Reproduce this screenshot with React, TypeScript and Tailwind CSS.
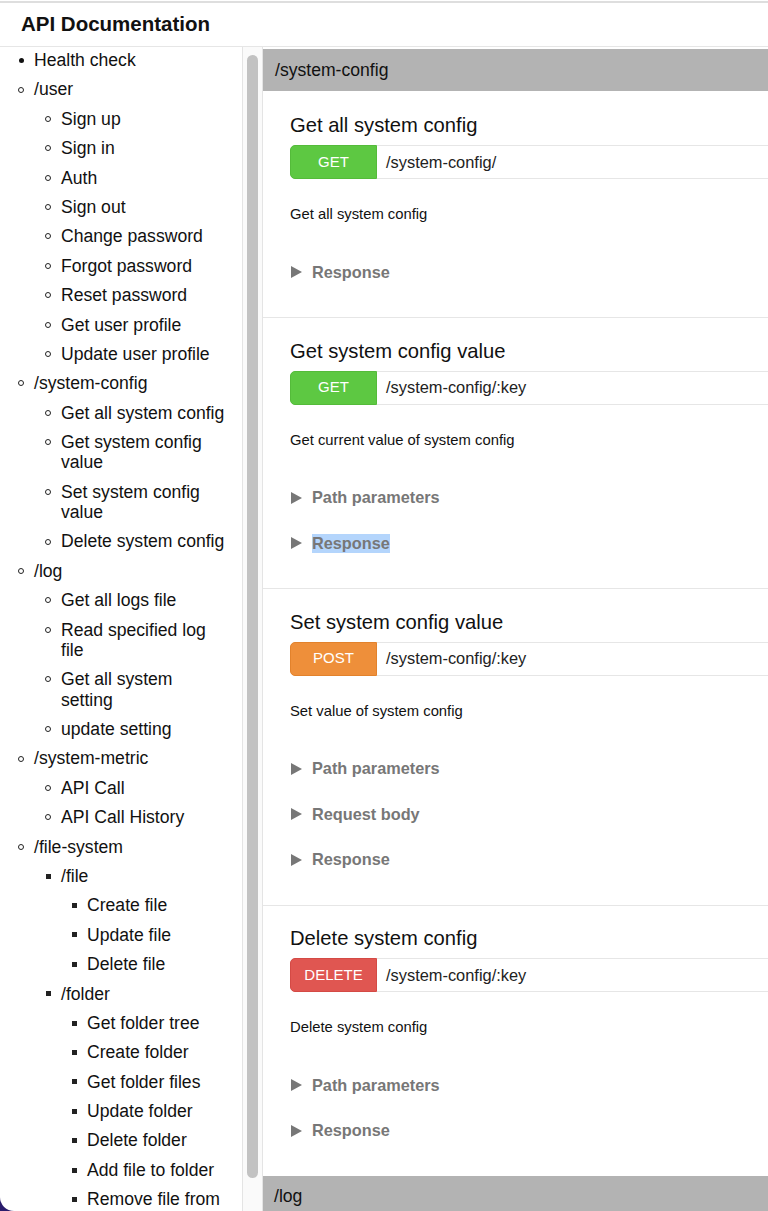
import React from "react";

type Marker = "disc" | "circle" | "square";
type NavItem = { label: string; marker: Marker; level: 0 | 1 | 2 };

const nav: NavItem[] = [
  { label: "Health check", marker: "disc", level: 0 },
  { label: "/user", marker: "circle", level: 0 },
  { label: "Sign up", marker: "circle", level: 1 },
  { label: "Sign in", marker: "circle", level: 1 },
  { label: "Auth", marker: "circle", level: 1 },
  { label: "Sign out", marker: "circle", level: 1 },
  { label: "Change password", marker: "circle", level: 1 },
  { label: "Forgot password", marker: "circle", level: 1 },
  { label: "Reset password", marker: "circle", level: 1 },
  { label: "Get user profile", marker: "circle", level: 1 },
  { label: "Update user profile", marker: "circle", level: 1 },
  { label: "/system-config", marker: "circle", level: 0 },
  { label: "Get all system config", marker: "circle", level: 1 },
  { label: "Get system config value", marker: "circle", level: 1 },
  { label: "Set system config value", marker: "circle", level: 1 },
  { label: "Delete system config", marker: "circle", level: 1 },
  { label: "/log", marker: "circle", level: 0 },
  { label: "Get all logs file", marker: "circle", level: 1 },
  { label: "Read specified log file", marker: "circle", level: 1 },
  { label: "Get all system setting", marker: "circle", level: 1 },
  { label: "update setting", marker: "circle", level: 1 },
  { label: "/system-metric", marker: "circle", level: 0 },
  { label: "API Call", marker: "circle", level: 1 },
  { label: "API Call History", marker: "circle", level: 1 },
  { label: "/file-system", marker: "circle", level: 0 },
  { label: "/file", marker: "square", level: 1 },
  { label: "Create file", marker: "square", level: 2 },
  { label: "Update file", marker: "square", level: 2 },
  { label: "Delete file", marker: "square", level: 2 },
  { label: "/folder", marker: "square", level: 1 },
  { label: "Get folder tree", marker: "square", level: 2 },
  { label: "Create folder", marker: "square", level: 2 },
  { label: "Get folder files", marker: "square", level: 2 },
  { label: "Update folder", marker: "square", level: 2 },
  { label: "Delete folder", marker: "square", level: 2 },
  { label: "Add file to folder", marker: "square", level: 2 },
  { label: "Remove file from folder", marker: "square", level: 2 },
];

const levelPad = ["pl-[14px]", "pl-[41px]", "pl-[67px]"];

function Bullet({ marker }: { marker: Marker }) {
  if (marker === "disc") return <span className="block w-[5px] h-[5px] rounded-full bg-[#111]" />;
  if (marker === "circle")
    return <span className="block w-[6px] h-[6px] rounded-full border border-[#222]" />;
  return <span className="block w-[5px] h-[5px] bg-[#222]" />;
}

type Method = "GET" | "POST" | "DELETE";
const methodCls: Record<Method, string> = {
  GET: "bg-[#5dc842] border-[#54bb3a]",
  POST: "bg-[#ee8f3a] border-[#e2822c]",
  DELETE: "bg-[#e05651] border-[#d44a45]",
};

type Card = {
  title: string;
  method: Method;
  path: string;
  desc: string;
  details: string[];
  highlight?: string;
};

const cards: Card[] = [
  {
    title: "Get all system config",
    method: "GET",
    path: "/system-config/",
    desc: "Get all system config",
    details: ["Response"],
  },
  {
    title: "Get system config value",
    method: "GET",
    path: "/system-config/:key",
    desc: "Get current value of system config",
    details: ["Path parameters", "Response"],
    highlight: "Response",
  },
  {
    title: "Set system config value",
    method: "POST",
    path: "/system-config/:key",
    desc: "Set value of system config",
    details: ["Path parameters", "Request body", "Response"],
  },
  {
    title: "Delete system config",
    method: "DELETE",
    path: "/system-config/:key",
    desc: "Delete system config",
    details: ["Path parameters", "Response"],
  },
];

function Triangle() {
  return (
    <svg width="11" height="12" viewBox="0 0 11 12" className="ml-[1px] mr-[10px] shrink-0">
      <polygon points="0,0 11,6 0,12" fill="#777777" />
    </svg>
  );
}

function EndpointCard({ card, first }: { card: Card; first: boolean }) {
  return (
    <div
      className={
        first
          ? "pt-[22px] pb-[35px] pl-[27px]"
          : "pt-[20.5px] pb-[35px] pl-[27px] border-t border-[#e6e6e6]"
      }
    >
      <div className="text-[20.2px] leading-[24px] text-[#111]">{card.title}</div>
      <div className="flex h-[34px] mt-[8px] mr-[-40px]">
        <div
          className={
            "w-[87px] shrink-0 rounded-l-[5px] border flex items-center justify-center text-white text-[15px] " +
            methodCls[card.method]
          }
        >
          {card.method}
        </div>
        <div className="flex-1 border-y border-[#e6e6e6] flex items-center pl-[9px] text-[16.4px] text-[#222]">
          {card.path}
        </div>
      </div>
      <div className="mt-[26px] text-[14.8px] leading-[18px] text-[#111]">{card.desc}</div>
      <div className="mt-[39px] flex flex-col gap-[25.5px]">
        {card.details.map((d) => (
          <div key={d} className="flex items-center h-[20px] text-[16.3px] font-bold text-[#777]">
            <Triangle />
            {card.highlight === d ? (
              <span className="bg-[#b4d5fc] leading-[19px]">{d}</span>
            ) : (
              <span>{d}</span>
            )}
          </div>
        ))}
      </div>
    </div>
  );
}

export default function App() {
  return (
    <div
      className="w-full h-[1211px] bg-[#2a1c6c]"
      style={{ fontFamily: '"Liberation Sans", Arial, Helvetica, sans-serif' }}
    >
      <div className="h-full bg-white rounded-bl-[14px] overflow-hidden flex flex-col">
        <div className="pt-px shrink-0">
          <div className="h-[46px] border-t-2 border-t-[#dedede] border-b border-b-[#e6e6e6] flex items-center pl-[21px]">
            <span className="text-[20.5px] font-bold text-[#111]">API Documentation</span>
          </div>
        </div>
        <div className="flex flex-1 min-h-0">
          <div className="w-[243px] shrink-0 border-r border-[#e4e4e4] overflow-hidden pt-[3px] pr-[14px]">
            <ul className="flex flex-col gap-[9.1px] text-[17.6px] leading-[20.3px] text-[#111]">
              {nav.map((n, i) => (
                <li key={i} className={"flex items-start " + levelPad[n.level]}>
                  <span className="w-[14px] mr-[6px] h-[20.3px] shrink-0 flex items-center justify-center">
                    <Bullet marker={n.marker} />
                  </span>
                  <span>{n.label}</span>
                </li>
              ))}
            </ul>
          </div>
          <div className="w-[19px] shrink-0 bg-[#fafafa] pt-[8px] pb-[33px] pl-[4px] flex">
            <div className="w-[11px] rounded-full bg-[#c2c2c2]" />
          </div>
          <div className="flex-1 min-w-0 border-l border-[#e4e4e4] overflow-hidden pt-[2px]">
            <div className="h-[42px] bg-[#b3b3b3] flex items-center pl-[12px] text-[17.6px] text-[#111]">
              /system-config
            </div>
            {cards.map((c, i) => (
              <EndpointCard key={c.title} card={c} first={i === 0} />
            ))}
            <div className="h-[42px] bg-[#b3b3b3] flex items-center pl-[11px] text-[17.6px] text-[#111]">
              /log
            </div>
          </div>
        </div>
      </div>
    </div>
  );
}
